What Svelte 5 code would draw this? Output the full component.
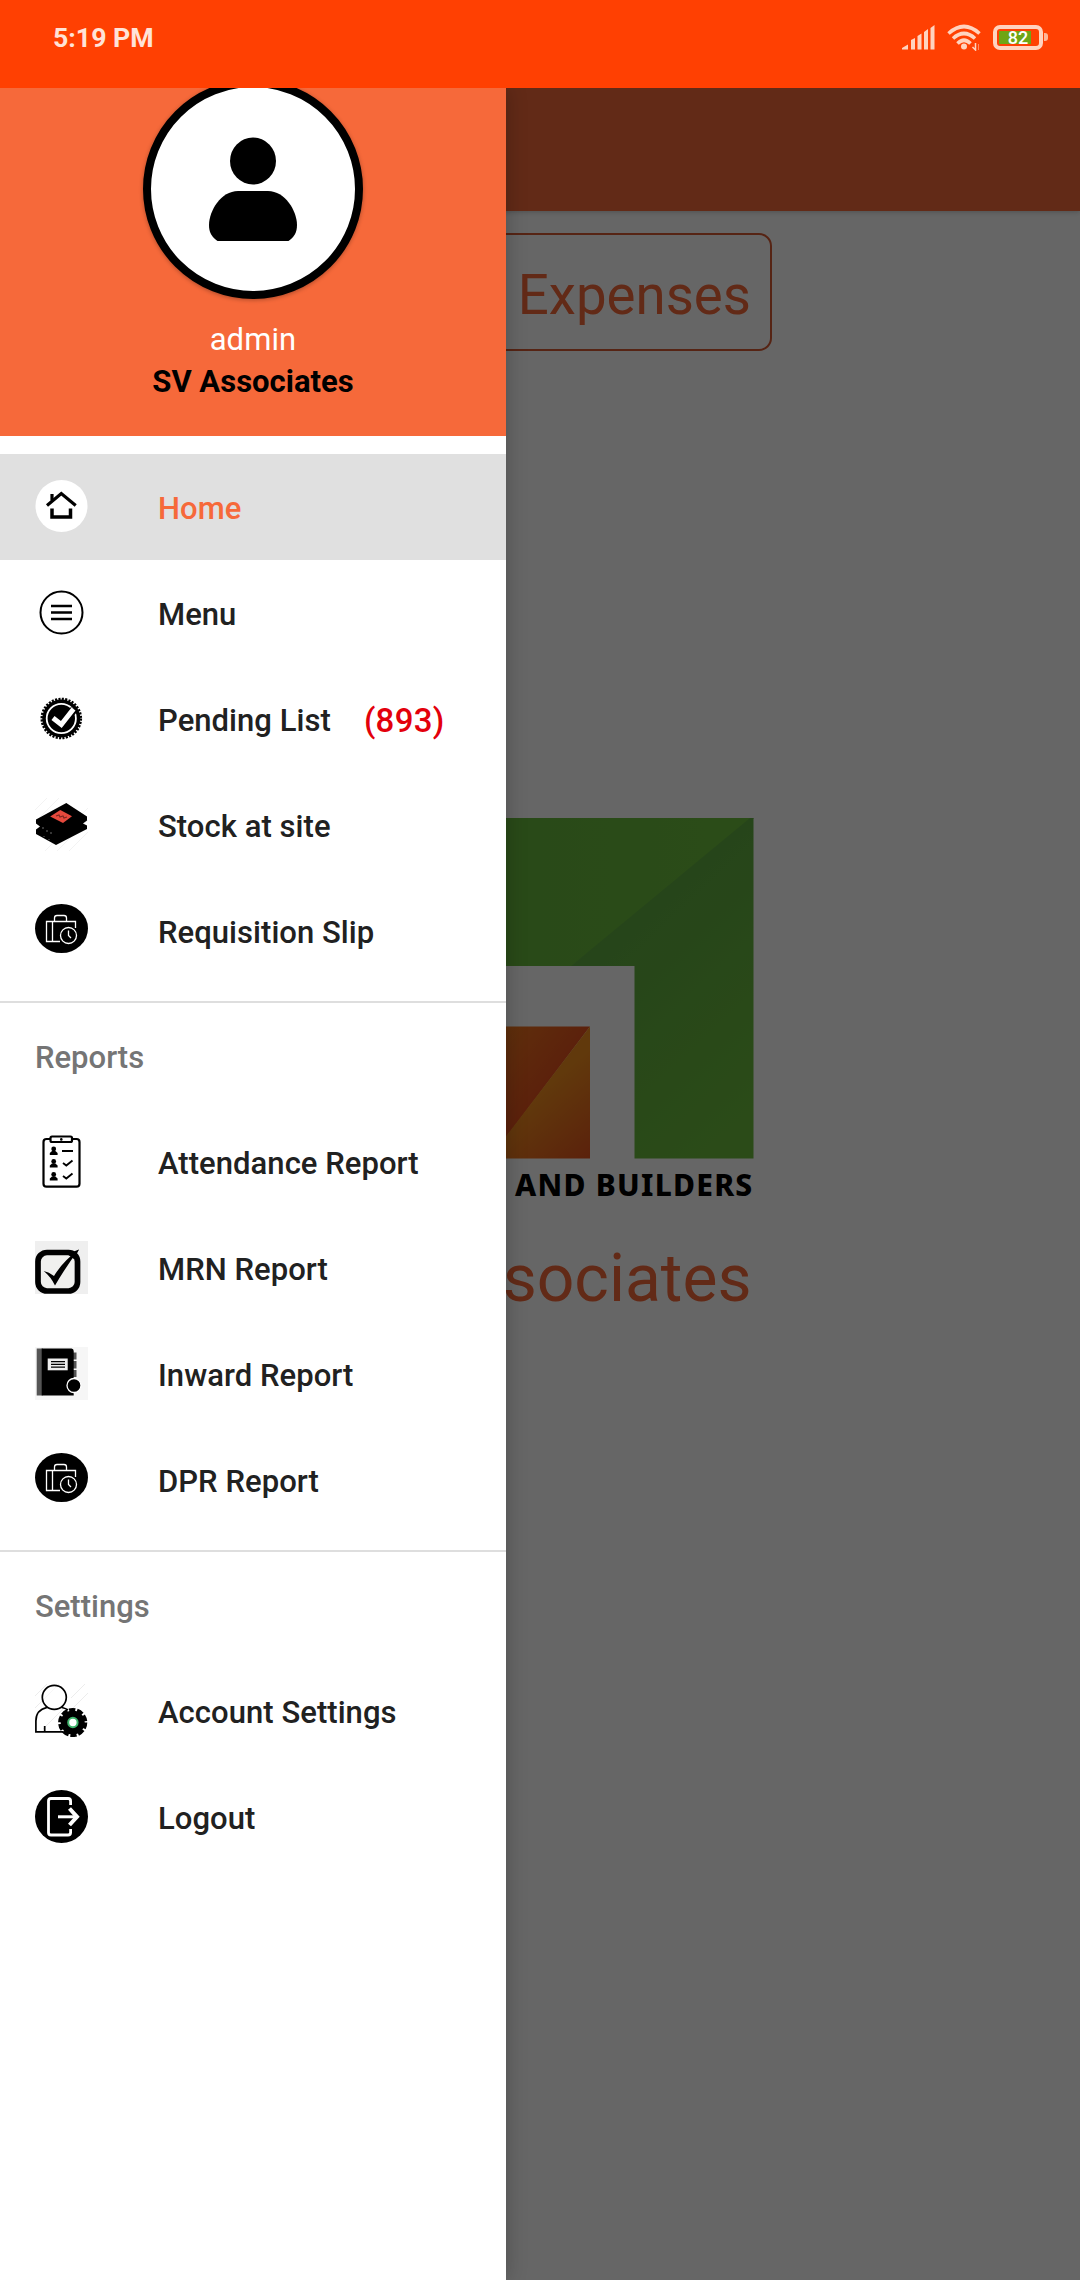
<script>
  let active = 'home';

  const pendingCount = 893;

  const groups = [
    {
      title: '',
      items: [
        { id: 'home', label: 'Home', icon: 'home' },
        { id: 'menu', label: 'Menu', icon: 'menu' },
        { id: 'pending', label: 'Pending List', icon: 'badge', count: pendingCount },
        { id: 'stock', label: 'Stock at site', icon: 'stock' },
        { id: 'requisition', label: 'Requisition Slip', icon: 'case' },
      ],
    },
    {
      title: 'Reports',
      items: [
        { id: 'attendance', label: 'Attendance Report', icon: 'clipboard' },
        { id: 'mrn', label: 'MRN Report', icon: 'check' },
        { id: 'inward', label: 'Inward Report', icon: 'book' },
        { id: 'dpr', label: 'DPR Report', icon: 'case' },
      ],
    },
    {
      title: 'Settings',
      items: [
        { id: 'account', label: 'Account Settings', icon: 'account' },
        { id: 'logout', label: 'Logout', icon: 'logout' },
      ],
    },
  ];
</script>

<div class="phone">
  <header class="status-bar">
    <span class="time">5:19 PM</span>
    <div class="status-icons">
      <svg width="33" height="25" viewBox="0 0 33 25" fill="#ffd3bf">
        <path d="M0 24.500V23L6 19.500V24.500ZM9 15l4-2V24.500H9ZM15.500 11l4-2.500V24.500h-4ZM22 7l4-3V24.500h-4ZM28.500 3l4-3V24.500h-4Z" />
      </svg>
      <svg width="34" height="27" viewBox="0 0 34 27" fill="none" stroke="#ffd3bf" stroke-width="3.600">
        <path d="M1.500 9.500Q17-4.500 32.500 9.500M6 14.500Q17 4.500 28 14.500M10.500 19.500Q17 13 23.500 19.500" />
        <circle cx="17" cy="22.500" r="3" fill="#ffd3bf" stroke="none" />
        <path d="M28.500 19v7l-3-3" stroke-width="1.500" />
        <path d="M31.500 26v-6" stroke-width="1" opacity=".5" />
      </svg>
      <div class="battery">
        <div class="battery-body"><span class="battery-fill"></span><span class="battery-text">82</span></div>
        <span class="battery-nub"></span>
      </div>
    </div>
  </header>

  <div class="stage">
    <main class="screen">
      <div class="toolbar"></div>
      <div class="expenses">Expenses</div>
      <section class="brand">
        <svg class="logo" width="427" height="341" viewBox="0 0 427 341">
          <defs>
            <linearGradient id="leaf" x1="0" y1="0" x2="1" y2="0">
              <stop offset="0" stop-color="#64b53e" />
              <stop offset="1" stop-color="#6cbe3c" />
            </linearGradient>
            <linearGradient id="leafDark" x1="0.200" y1="0" x2="0.700" y2="1">
              <stop offset="0.200" stop-color="#5eaa42" />
              <stop offset="1" stop-color="#6bbc3c" />
            </linearGradient>
            <linearGradient id="rust" gradientUnits="userSpaceOnUse" x1="165" y1="195" x2="232" y2="246">
              <stop offset="0" stop-color="#f0811c" />
              <stop offset="1" stop-color="#e65420" />
            </linearGradient>
            <linearGradient id="amber" gradientUnits="userSpaceOnUse" x1="222" y1="264" x2="275" y2="325">
              <stop offset="0" stop-color="#f3901e" />
              <stop offset="1" stop-color="#e4561e" />
            </linearGradient>
          </defs>
          <path d="M0 0H427L245 148H0Z" fill="url(#leaf)" />
          <path d="M423 0H426.500V340.500H307.500V148H244Z" fill="url(#leafDark)" />
          <path d="M60 208.500H263L180 318L163 340.500H60Z" fill="url(#rust)" />
          <path d="M263 208.500V340.500H163L180 317Z" fill="url(#amber)" />
        </svg>
        <div class="tagline">AND BUILDERS</div>
        <div class="company">SV Associates</div>
      </section>
    </main>
    <div class="scrim"></div>

    <nav class="drawer">
      <div class="profile">
        <div class="avatar">
          <svg width="90" height="104" viewBox="0 0 90 104">
            <ellipse cx="45" cy="24" rx="23" ry="23.500" />
            <path d="M30 54H60C77 54 89 74 89 88C89 96 86 100 80.500 104H9.500C4 100 1 96 1 88C1 74 13 54 30 54Z" />
          </svg>
        </div>
        <div class="user">admin</div>
        <div class="org">SV Associates</div>
      </div>

      <div class="groups">
        {#each groups as group}
          <div class="group">
            {#if group.title}
              <div class="group-title">{group.title}</div>
            {/if}
            {#each group.items as item}
              <div
                class="item"
                class:active={active === item.id}
                on:click={() => (active = item.id)}
                on:keydown={(e) => e.key === 'Enter' && (active = item.id)}
                role="button"
                tabindex="0"
              >
                <svg class="icon" viewBox="0 0 53 53">
                  {#if item.icon === 'home'}
                    <circle cx="26.500" cy="26" r="26" fill="#fff" />
                    <g fill="none" stroke="#000" stroke-width="3.200">
                      <path d="M12 25.500L26.300 13.500L40.700 25.500" />
                      <path d="M17 28.500V37H35.500V28.500" stroke-width="3.500" />
                      <path d="M17 20.500V14" />
                    </g>
                  {:else if item.icon === 'menu'}
                    <circle cx="26.500" cy="26.500" r="21" fill="none" stroke="#000" stroke-width="2" />
                    <path d="M16 20H37M16 26.500H37M16 33H37" stroke="#000" stroke-width="2.300" />
                  {:else if item.icon === 'badge'}
                    <circle cx="26.300" cy="26.500" r="19" />
                    <circle cx="26.300" cy="26.500" r="19.500" fill="none" stroke="#000" stroke-width="2.600" stroke-dasharray="2.100 1.300" />
                    <circle cx="26.300" cy="26.500" r="14.600" fill="none" stroke="#fff" stroke-width="1.800" />
                    <path d="M17.500 26L26 32.500L39 17.500" fill="none" stroke="#000" stroke-width="8" />
                    <path d="M18 26L26.300 32.500L38.500 17" fill="none" stroke="#fff" stroke-width="5" />
                  {:else if item.icon === 'stock'}
                    <path d="M0 12L12 0M0 24L24 0M10 53L53 10M22 53L53 22M34 53L53 34" stroke="#f3f3f3" stroke-width="1" />
                    <path d="M31.300 5L52 18.500V22.500L48 25.500L52 27.500V31L21 47L1 36V31.500L5 28.500L1 25.500V21.500Z" />
                    <path d="M25.300 12L37 18.200L28 25L15.200 18.500Z" fill="#e5493d" />
                    <path d="M21 18l3-1 1 2 3-1 1 2 3-1" fill="none" stroke="#7d2620" stroke-width="1.200" />
                    <path d="M8 29v2M12 32v2M16 34v2M9 38v1M14 41v1" stroke="#888" stroke-width=".8" />
                  {:else if item.icon === 'case'}
                    <ellipse cx="26.500" cy="24.500" rx="26.500" ry="24.500" />
                    <g fill="none" stroke="#fff" stroke-width="1.300">
                      <path d="M25 37.500H11.500V17.500H40.500V24M17.500 18V37" />
                      <path d="M19.500 17V14Q19.500 11.500 22 11.500H29Q31.500 11.500 31.500 14V17" />
                      <circle cx="33.500" cy="31.500" r="8" fill="#000" />
                      <path d="M33.500 26.500V31.500L36 34" />
                    </g>
                  {:else if item.icon === 'clipboard'}
                    <g fill="none" stroke="#000" stroke-width="2.200">
                      <rect x="8.500" y="4" width="36" height="47.700" rx="3" />
                      <rect x="15.500" y="1.500" width="21.500" height="5.500" rx="1.500" fill="#fff" />
                      <path d="M27 16H38M28 28L31.300 30.500L37.500 25.500M28 41L31.300 43.500L37.500 38.500" stroke-width="1.900" />
                    </g>
                    <circle cx="26.300" cy="4.400" r="1.300" />
                    {#each [16, 28.5, 41.5] as y}
                      <circle cx="18.700" cy={y - 2} r="2.400" />
                      <path d="M14.800 {y + 4}V{y + 2}L17 {y}H20.400L22.600 {y + 2}V{y + 4}Z" />
                    {/each}
                  {:else if item.icon === 'check'}
                    <rect width="53" height="53" fill="#efefef" />
                    <rect x="3" y="11.500" width="39.500" height="38.500" rx="9" fill="#f0f0ee" stroke="#000" stroke-width="5.700" />
                    <path d="M44 8.500L32 13L39 18Z" fill="#000" />
                    <path d="M8.700 30Q14 31 19 35Q28 20 44 8.500Q32 24 20 44.500Q16 36 8.700 30Z" />
                  {:else if item.icon === 'book'}
                    <rect width="53" height="53" fill="#f6f6f6" />
                    <rect x="1.700" y="1.500" width="6" height="47" fill="#555" />
                    <path d="M38 5.500h3.500v7H38ZM38 14h3.500v7.500H38ZM38 23h3.500v7H38Z" fill="#555" />
                    <path d="M6.700 1.500H36.500Q38.700 1.500 38.700 4V48.500H6.700Z" />
                    <rect x="12.700" y="11.500" width="20" height="11.800" fill="#eee" />
                    <path d="M16 14.600H30M16 17.400H30M16 20.200H30" stroke="#000" stroke-width="1.300" />
                    <circle cx="39" cy="38.500" r="7" stroke="#fff" stroke-width="1.300" />
                  {:else if item.icon === 'account'}
                    <path d="M0 12L12 0M0 24L24 0M36 14L50 0M38 24L53 9M8 45L28 25" stroke="#ececec" stroke-width="1" />
                    <g fill="none" stroke="#000" stroke-width="1.700">
                      <circle cx="19.300" cy="13.300" r="12" fill="#fff" fill-opacity=".6" />
                      <path d="M12 23.500C5 25 .9 30 .9 37V47.800H28M27 23.500Q31 24.500 33 26M9.700 42V47.800" />
                    </g>
                    <circle cx="37.700" cy="38.500" r="12" />
                    <circle cx="37.700" cy="38.500" r="12.300" fill="none" stroke="#000" stroke-width="4.600" stroke-dasharray="6 1.730" />
                    <circle cx="37.900" cy="38.500" r="4.700" fill="#fff" stroke="#3fb56c" stroke-width="2" />
                  {:else if item.icon === 'logout'}
                    <circle cx="26.500" cy="26.500" r="26.500" />
                    <g fill="none" stroke="#fff">
                      <path d="M35.600 15V11Q35.600 8.500 33 8.500H16Q13.500 8.500 13.500 11V42.500Q13.500 45 16 45H33Q35.600 45 35.600 42.500V39" stroke-width="2.800" />
                      <path d="M23 26.800H41" stroke-width="3" />
                      <path d="M34.500 18.500L42 26.800L34.500 35" stroke-width="4" />
                    </g>
                  {/if}
                </svg>
                <span class="label">{item.label}</span>
                {#if item.count}
                  <span class="count">({item.count})</span>
                {/if}
              </div>
            {/each}
          </div>
        {/each}
      </div>
    </nav>
  </div>
</div>

<style>
  .phone {
    width: 1080px; height: 2280px; overflow: hidden;
    display: flex; flex-direction: column;
    font-family: Roboto, "Liberation Sans", sans-serif;
    background: #fff;
  }

  /* Status bar */
  .status-bar {
    height: 88px; flex-shrink: 0; box-sizing: border-box;
    display: flex; align-items: center; justify-content: space-between;
    padding: 0 32px 14px 53px; background: #ff4002; color: #ffe3d8;
  }
  .time { font-size: 26.7px; font-weight: 700; line-height: 32px; padding-top: 2px; }
  .status-icons { display: flex; align-items: center; gap: 12px; }
  .battery { display: flex; align-items: center; gap: 1px; }
  .battery-body {
    box-sizing: border-box; width: 50px; height: 25px; padding: 2px;
    border: 4px solid #ffd3bf; border-radius: 7px; position: relative;
  }
  .battery-fill { display: block; width: 32px; height: 13px; background: #6fa515; }
  .battery-text {
    position: absolute; inset: 0; text-align: center;
    font-size: 18px; font-weight: 500; line-height: 18px; color: #fff;
  }
  .battery-nub { width: 4px; height: 8px; border-radius: 0 3px 3px 0; background: #ffb596; }

  .stage { position: relative; flex: 1; overflow: hidden; }

  /* Page behind the drawer */
  .screen { height: 100%; display: flex; flex-direction: column; align-items: center; }
  .toolbar {
    width: 100%; height: 123px; flex-shrink: 0;
    background: #f6693a; box-shadow: 0 1px 5px rgba(0,0,0,0.22);
  }
  .expenses {
    box-sizing: border-box; width: 464px; height: 118px; margin-top: 22px;
    border: 2px solid #d85a32; border-radius: 13px; padding-right: 19px;
    color: #f6693a; font-size: 54.600px; line-height: 120px; text-align: right;
  }
  .brand { width: 427px; margin-top: 467px; text-align: right; }
  .logo { display: block; }
  .tagline {
    font-family: "Noto Sans", sans-serif; font-weight: 800;
    font-size: 30px; line-height: 42px; letter-spacing: 1.25px; margin-top: 5px;
    color: #000; white-space: nowrap;
  }
  .company { font-size: 66px; line-height: 78px; margin-top: 34px; color: #f6693a; padding-right: 2px; }
  .scrim { position: absolute; inset: 0; background: rgba(0,0,0,0.6); }

  /* Drawer */
  .drawer {
    position: absolute; top: 0; left: 0; width: 506px; height: 100%;
    background: #fff; box-shadow: 0 0 20px rgba(0,0,0,0.24);
  }
  .profile {
    height: 348px; overflow: hidden; background: #f6693a;
    display: flex; flex-direction: column; align-items: center;
  }
  .avatar {
    box-sizing: border-box; width: 220px; height: 220px; flex-shrink: 0; margin-top: -9px;
    border: 8px solid #000; border-radius: 50%; background: #fff;
    display: flex; align-items: center; justify-content: center;
    box-shadow: 0 1px 4px rgba(0,0,0,0.3);
  }
  .user { margin-top: 20px; font-size: 31px; line-height: 42px; letter-spacing: 0.1px; color: #fff; }
  .org { font-size: 31px; font-weight: 700; line-height: 42px; color: #000; }

  .groups { padding-top: 18px; }
  .group { padding-bottom: 17px; }
  .group + .group { border-top: 2px solid #dedede; }
  .group-title {
    height: 106px; padding-left: 35px; line-height: 110px;
    font-size: 31px; font-weight: 500; color: #757575;
  }
  .item {
    display: flex; align-items: center; height: 106px; padding-left: 35px;
    color: #212121; font-size: 31px; font-weight: 500; letter-spacing: 0.05px;
    cursor: pointer; outline: none;
  }
  .item.active { background: #e0e0e0; color: #f6693a; }
  .icon { width: 53px; height: 53px; margin: 0 70px 1px 0; flex-shrink: 0; }
  .label { line-height: 36px; padding-top: 4px; }
  .count { margin-left: 33px; font-size: 33px; line-height: 36px; letter-spacing: 0.3px; color: #e3000b; padding-top: 4px; }
</style>
